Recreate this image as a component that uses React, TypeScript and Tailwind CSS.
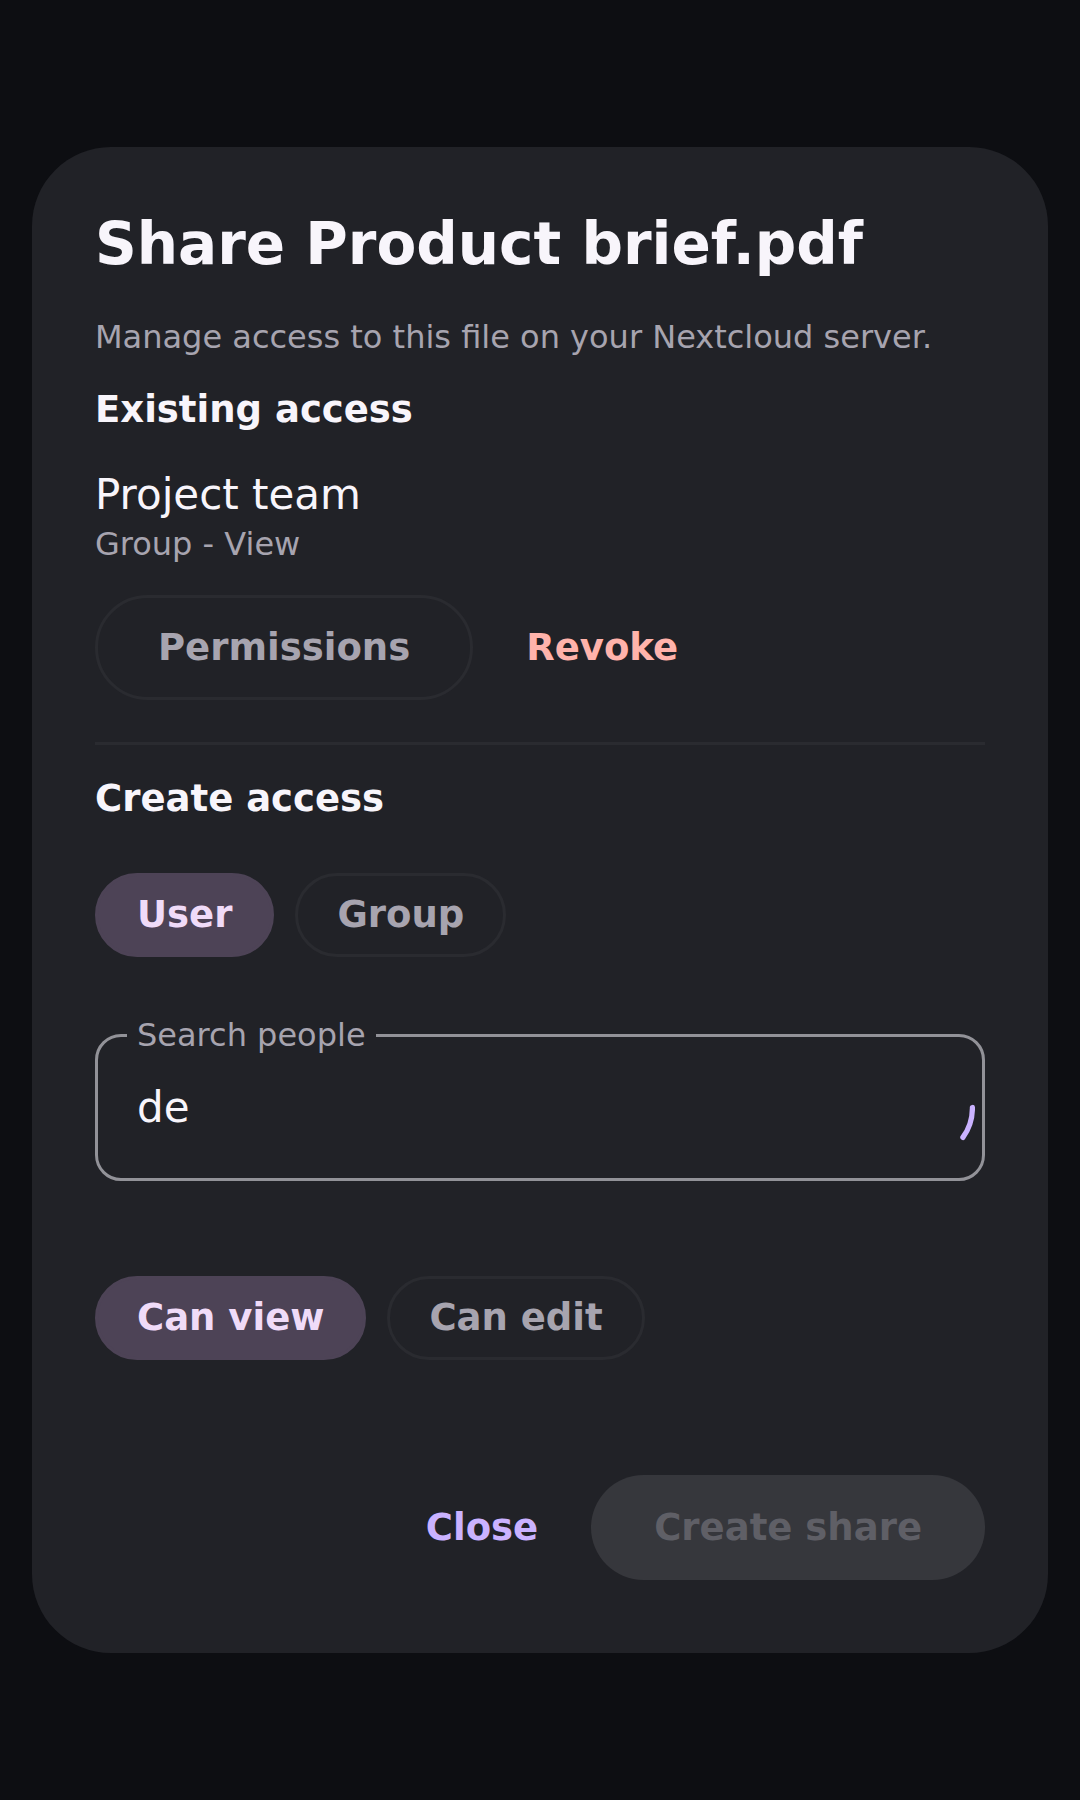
import { useState } from 'react'
import clsx from 'clsx'

type ChipGroupProps = {
  label: string
  options: string[]
  value: string
  onChange: (value: string) => void
}

function ChipGroup({ label, options, value, onChange }: ChipGroupProps) {
  return (
    <div role="group" aria-label={label} className="flex flex-wrap gap-[21px]">
      {options.map((option) => (
        <button
          key={option}
          type="button"
          aria-pressed={value === option}
          onClick={() => onChange(option)}
          className={clsx(
            'h-[84px] rounded-full border-3 px-[39px] text-[37px] leading-[44px] font-bold',
            value === option
              ? 'border-[#4d4356] bg-[#4d4356] text-[#f0dbf8]'
              : 'border-[#2a2b30] text-[#a7a4af]'
          )}
        >
          {option}
        </button>
      ))}
    </div>
  )
}

function Spinner() {
  return (
    <svg className="h-[105px] w-[105px] shrink-0" viewBox="0 0 105 105" fill="none" aria-hidden="true">
      <path
        d="M102.4 52.5A49.9 49.9 0 0 1 92.9 82.4"
        stroke="#cab2ff"
        strokeWidth="5.25"
        strokeLinecap="round"
      />
    </svg>
  )
}

export default function App() {
  const [shareType, setShareType] = useState('User')
  const [permission, setPermission] = useState('Can view')
  const [query, setQuery] = useState('de')

  return (
    <main className="flex min-h-screen items-center bg-[#0d0e12] px-8 font-['DejaVu_Sans',sans-serif] text-[#f8f5fb]">
      <section
        role="dialog"
        aria-labelledby="share-title"
        className="w-full rounded-[79px] bg-[#212227] px-[63px] pt-[63px] pb-[73px]"
      >
        <h1 id="share-title" className="text-[58px] leading-[68px] font-bold">
          Share Product brief.pdf
        </h1>
        <p className="mt-10 text-[32px] leading-[38px] text-[#a7a4af]">
          Manage access to this file on your Nextcloud server.
        </p>

        {/* Existing shares */}
        <h2 className="mt-8 text-[37px] leading-[44px] font-bold">Existing access</h2>
        <div className="mt-[38px] text-[42px] leading-[50px]">Project team</div>
        <div className="mt-[5px] text-[32px] leading-[38px] text-[#a7a4af]">Group - View</div>
        <div className="mt-8 flex gap-[21px] text-[37px] leading-[44px] font-bold">
          <button type="button" className="h-[105px] rounded-full border-3 border-[#2a2b30] px-[60px] text-[#a7a4af]">
            Permissions
          </button>
          <button type="button" className="h-[105px] px-8 text-[#ffb3ab]">
            Revoke
          </button>
        </div>
        <hr className="mt-[42px] border-t-3 border-[#2a2b30]" />

        {/* New share */}
        <h2 className="mt-8 mb-[52px] text-[37px] leading-[44px] font-bold">Create access</h2>
        <ChipGroup label="Share with" options={['User', 'Group']} value={shareType} onChange={setShareType} />

        <div className="relative mt-[77px] flex h-[147px] items-center rounded-[26px] border-3 border-[#929298] pr-[7px] pl-[39px]">
          <label
            htmlFor="people"
            className="absolute -top-[21px] left-[29px] bg-[#212227] px-[10px] text-[32px] leading-[38px] text-[#a7a4af]"
          >
            Search people
          </label>
          <input
            id="people"
            type="text"
            value={query}
            onChange={(e) => setQuery(e.target.value)}
            className="min-w-0 flex-1 bg-transparent text-[42px] leading-[50px] outline-none"
          />
          <Spinner />
        </div>

        <div className="mt-[95px]">
          <ChipGroup
            label="Permission"
            options={['Can view', 'Can edit']}
            value={permission}
            onChange={setPermission}
          />
        </div>

        <div className="mt-[115px] flex justify-end gap-[21px] text-[37px] leading-[44px] font-bold">
          <button type="button" className="h-[105px] px-8 text-[#cab2ff]">
            Close
          </button>
          <button type="button" disabled className="h-[105px] rounded-full bg-[#36373c] px-[63px] text-[#5f5f66]">
            Create share
          </button>
        </div>
      </section>
    </main>
  )
}
